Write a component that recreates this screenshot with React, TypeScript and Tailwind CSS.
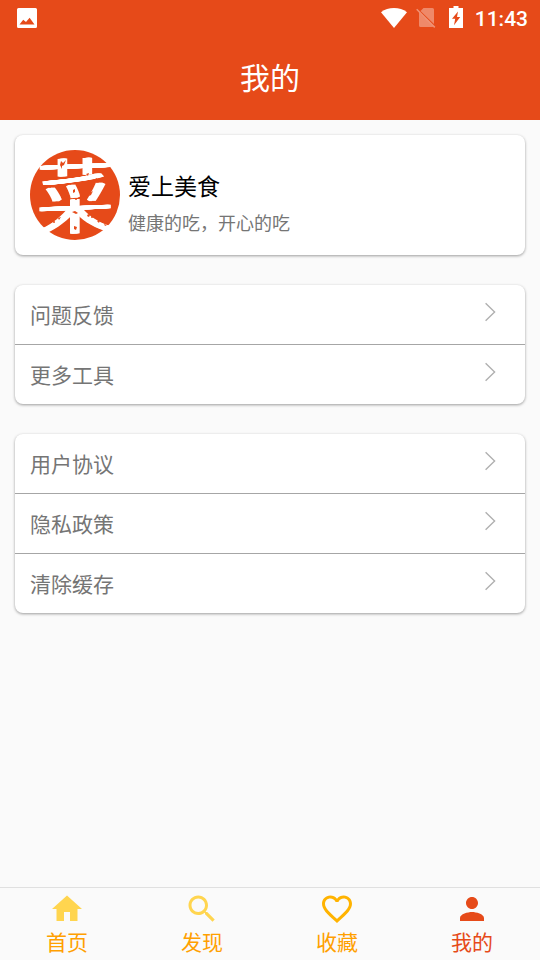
import type { ReactNode } from 'react';

const FEEDBACK_ITEMS = ['问题反馈', '更多工具'];
const LEGAL_ITEMS = ['用户协议', '隐私政策', '清除缓存'];

interface Tab {
  label: string;
  path: string;
  iconClass: string;
  labelClass: string;
}

const TABS: Tab[] = [
  {
    label: '首页',
    path: 'M10 20v-6h4v6h5v-8h3L12 3 2 12h3v8z',
    iconClass: 'text-[#ffd54f]',
    labelClass: 'text-[#ffa000]',
  },
  {
    label: '发现',
    path: 'M15.5 14h-.79l-.28-.27C15.41 12.59 16 11.11 16 9.5 16 5.91 13.09 3 9.5 3S3 5.91 3 9.5 5.91 16 9.5 16c1.61 0 3.09-.59 4.23-1.57l.27.28v.79l5 4.99L20.49 19l-4.99-5zm-6 0C7.01 14 5 11.99 5 9.5S7.01 5 9.5 5 14 7.01 14 9.5 11.99 14 9.5 14z',
    iconClass: 'text-[#ffd54f]',
    labelClass: 'text-[#ffa000]',
  },
  {
    label: '收藏',
    path: 'M16.5 3c-1.74 0-3.41.81-4.5 2.09C10.91 3.81 9.24 3 7.5 3 4.42 3 2 5.42 2 8.5c0 3.78 3.4 6.86 8.55 11.54L12 21.35l1.45-1.32C18.6 15.36 22 12.28 22 8.5 22 5.42 19.58 3 16.5 3zm-4.4 15.55l-.1.1-.1-.1C7.14 14.24 4 11.39 4 8.5 4 6.5 5.5 5 7.5 5c1.54 0 3.04.99 3.57 2.36h1.87C13.46 5.99 14.96 5 16.5 5c2 0 3.5 1.5 3.5 3.5 0 2.89-3.14 5.74-7.9 10.05z',
    iconClass: 'text-[#ffb300]',
    labelClass: 'text-[#ffa000]',
  },
  {
    label: '我的',
    path: 'M12 12c2.21 0 4-1.79 4-4s-1.79-4-4-4-4 1.79-4 4 1.79 4 4 4zm0 2c-2.67 0-8 1.34-8 4v2h16v-2c0-2.66-5.33-4-8-4z',
    iconClass: 'text-[#e64a19]',
    labelClass: 'text-[#e64a19]',
  },
];

function StatusBar() {
  return (
    <div className="flex h-9 items-center justify-between pl-[17px] pr-3 text-white">
      <svg className="h-5 w-5" viewBox="0 0 20 20" fill="currentColor">
        <path
          fillRule="evenodd"
          d="M1.500 0h17A1.500 1.500 0 0 1 20 1.500v17a1.500 1.500 0 0 1-1.500 1.500h-17A1.500 1.500 0 0 1 0 18.500v-17A1.500 1.500 0 0 1 1.500 0zM2.500 16.400h15L12.600 9.700 9 14 6.200 11.700z"
        />
      </svg>
      <div className="flex items-center">
        <svg className="-mt-px h-5 w-[26px]" viewBox="0 0 26 20" fill="currentColor">
          <path d="M0 4.200C3.700 1.300 8.200 0 13 0s9.300 1.300 13 4.200L13 20z" />
        </svg>
        <svg className="ml-[9px] h-5 w-5" viewBox="0 0 20 20" fill="none">
          <path d="M7.500 0h9A1.500 1.500 0 0 1 18 1.500V16L4.500 3zM3 4.500 17 18.500a1.500 1.500 0 0 1-.5.500h-12A1.500 1.500 0 0 1 3 17.500z" fill="currentColor" opacity=".35" />
          <path d="M.7 1.200 18.800 19.400" stroke="currentColor" strokeWidth="1.500" opacity=".4" />
        </svg>
        <svg className="-mt-0.5 ml-[13px] h-[22px] w-[14px]" viewBox="0 0 14 22" fill="currentColor">
          <path fillRule="evenodd" d="M4.500 0h5v2H14v20H0V2h4.500zM9 5.500 3 12.700h3.200L5 19.300 11.200 11H8z" />
        </svg>
        <span className="ml-3 pt-0.5 font-[Roboto,sans-serif] text-[21px] font-medium leading-[34px]">11:43</span>
      </div>
    </div>
  );
}

function Logo() {
  return (
    <div className="relative flex h-[90px] w-[90px] items-center justify-center rounded-full bg-[#e64a19]">
      {/* Sideways shadows fatten the upright strokes only, like a flat brush */}
      <span className="-skew-y-2 scale-y-[1.12] pb-[7px] text-[74px] font-light leading-[90px] text-white [text-shadow:-3px_0_#fff,3px_0_#fff,-2px_0_#fff,2px_0_#fff,-1px_0_#fff,1px_0_#fff]">
        菜
      </span>
      <svg className="absolute inset-0" viewBox="0 0 90 90" fill="#e64a19">
        <path d="M31 11l2 2 3-3-2 5-2 1v3l-2-4zM65 29l2-1 1 3-2 1zM56 24l3-1-1 3zM43 40l2-1v3l-2 1zM60 43l3-2-2 4-2 1z" />
        <path d="M42 62l3-1 3 2-2 1zM44 76l3 1-1 3-2-1zM58 64l2 1-1 2-2-1zM67 71l3-1-1 3zM74 74l3 1-2 1zM28 68l3-1-2 3z" />
        <circle cx="49" cy="37" r="1" />
        <circle cx="46" cy="49" r="1" />
        <circle cx="62" cy="67" r="1" />
        <circle cx="24" cy="72" r="1" />
      </svg>
    </div>
  );
}

function Card({ className, children }: { className?: string; children: ReactNode }) {
  return (
    <section className={`rounded-[8px] bg-white shadow-[0_1px_3px_rgba(0,0,0,0.38)] ${className ?? ''}`}>
      {children}
    </section>
  );
}

function MenuCard({ items }: { items: string[] }) {
  return (
    <Card>
      <ul className="divide-y divide-[#a6a6a6]">
        {items.map((item) => (
          <li key={item} className="flex h-[60px] items-center justify-between pl-[15px] pr-[29px] last:h-[59px]">
            <span className="mb-0.5 text-[21px] leading-[30px] text-[#757575]">{item}</span>
            <svg className="mb-[5px] h-5 w-3" viewBox="0 0 12 20" fill="none" stroke="#b0b0b0" strokeWidth="1.400">
              <path d="m1.600 1.200 9 8.800-9 8.800" />
            </svg>
          </li>
        ))}
      </ul>
    </Card>
  );
}

function TabBar() {
  return (
    <nav className="flex h-[73px] border-t border-[#e0e0e0]">
      {TABS.map((tab) => (
        <button key={tab.label} className="flex flex-1 flex-col items-center pr-px pt-[3px]">
          <svg className={`h-9 w-9 shrink-0 ${tab.iconClass}`} viewBox="0 0 24 24" fill="currentColor">
            <path d={tab.path} />
          </svg>
          <span className={`text-[21px] leading-[28px] ${tab.labelClass}`}>{tab.label}</span>
        </button>
      ))}
    </nav>
  );
}

export default function App() {
  return (
    <div className="flex h-screen flex-col bg-[#fafafa] font-['Noto_Sans_CJK_SC',sans-serif]">
      <header className="h-[120px] bg-[#e64a19]">
        <StatusBar />
        <h1 className="text-center text-[30px] leading-[80px] text-white">我的</h1>
      </header>

      <main className="flex flex-1 flex-col gap-[30px] p-[15px]">
        <Card className="flex h-[120px] items-center pl-[15px]">
          <Logo />
          <div className="ml-2 pt-[18px]">
            <h2 className="text-[23px] leading-[36px] text-black">爱上美食</h2>
            <p className="text-[18px] leading-[38px] text-[#757575]">健康的吃，开心的吃</p>
          </div>
        </Card>
        <MenuCard items={FEEDBACK_ITEMS} />
        <MenuCard items={LEGAL_ITEMS} />
      </main>

      <TabBar />
    </div>
  );
}
